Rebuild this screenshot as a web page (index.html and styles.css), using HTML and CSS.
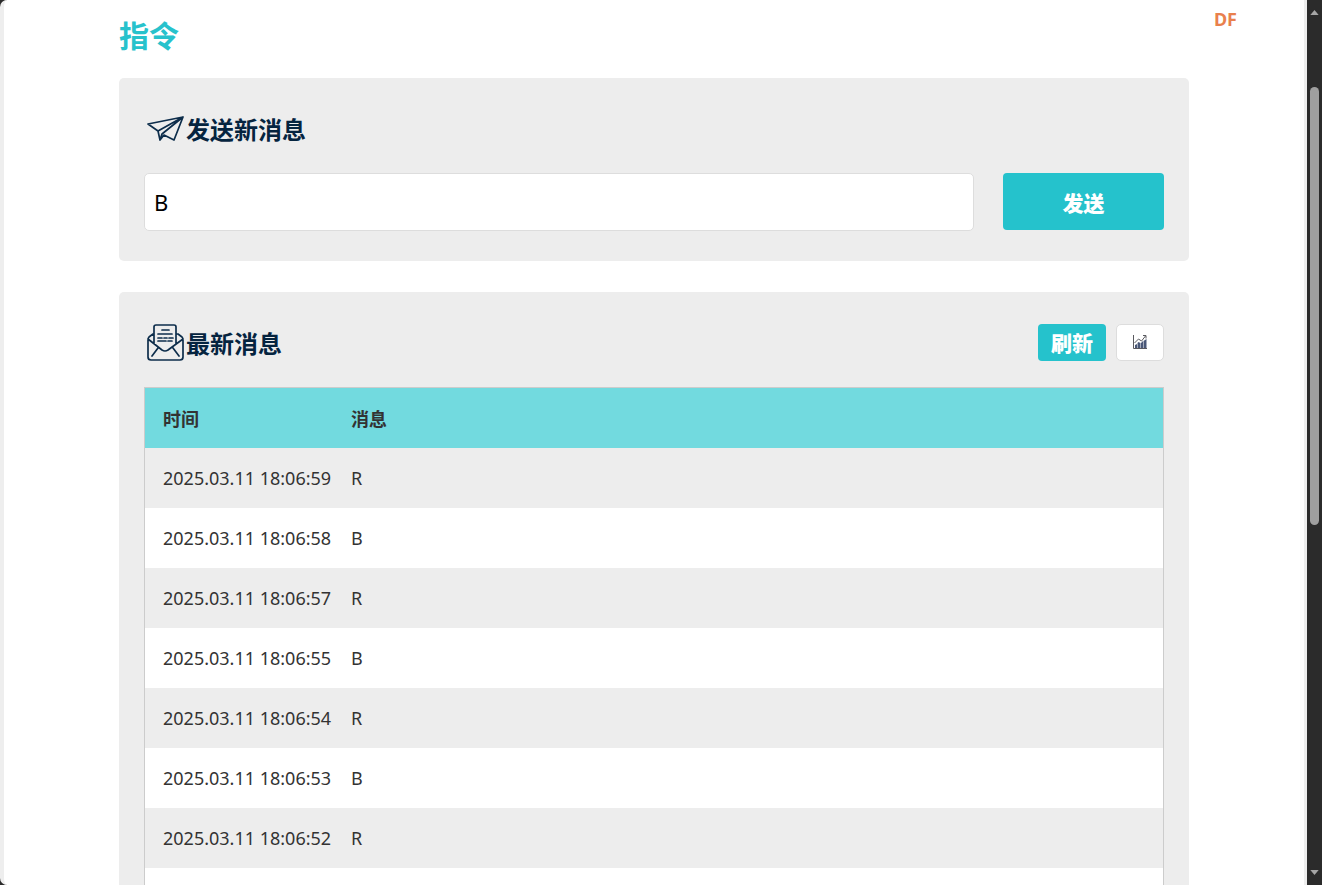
FILE: index.html
```html
<!DOCTYPE html>
<html lang="zh-CN">
<head>
<meta charset="utf-8">
<title>指令</title>
<link rel="stylesheet" href="styles.css">
</head>
<body>
<div class="window">
  <div class="viewport">
    <span class="badge">DF</span>
    <main class="content">
      <h1 class="title">指令</h1>
      <section class="card">
        <h2 class="heading">
          <svg class="heading-icon" viewBox="0 0 38 38" aria-hidden="true">
            <path d="M2 15 37 8 28 31 18 26 14 31 12 22ZM12 22 37 8 16 25 14 31"/>
          </svg>
          <label for="message">发送新消息</label>
        </h2>
        <form class="send-form">
          <input class="message-input" id="message" type="text" value="B">
          <button class="button send-button" type="button">发送</button>
        </form>
      </section>
      <section class="card">
        <div class="card-bar">
          <h2 class="heading">
            <svg class="heading-icon" viewBox="-1 -1 38 38" aria-hidden="true">
              <path d="M7 20V3q0-2 2-2h18q2 0 2 2v17M7 10H6L2 13q-1 1-1 3v17q0 3 3 3h29q3 0 3-3V16q0-2-1-3l-4-3h-2M1 15l14 11q3 2 6 0L36 15M5 32l6-8M32 32l-6-8M15 6h7M11 10h14M11 14h4M17 14h3M22 14h4M11 17h8M21 17h4"/>
            </svg>
            最新消息
          </h2>
          <div class="actions">
            <button class="button refresh-button" type="button">刷新</button>
            <button class="chart-button" type="button" aria-label="图表">
              <svg class="chart-icon" viewBox="0 0 14 15" aria-hidden="true">
                <path class="bars" d="M2 14V10l2-1v5zM4.500 14V8l1-1 2 1v6zM8 14V8l2-2v8zM10.500 14V6l3-2v10z"/>
                <path class="axis" d="M.5 0v13.500H14M1.500 8l4-4 3 2 4-5M10 .5h3v3"/>
              </svg>
            </button>
          </div>
        </div>
        <table class="messages">
          <thead><tr><th class="time" scope="col">时间</th><th scope="col">消息</th></tr></thead>
          <tbody>
            <tr><td>2025.03.11 18:06:59</td><td>R</td></tr>
            <tr><td>2025.03.11 18:06:58</td><td>B</td></tr>
            <tr><td>2025.03.11 18:06:57</td><td>R</td></tr>
            <tr><td>2025.03.11 18:06:55</td><td>B</td></tr>
            <tr><td>2025.03.11 18:06:54</td><td>R</td></tr>
            <tr><td>2025.03.11 18:06:53</td><td>B</td></tr>
            <tr><td>2025.03.11 18:06:52</td><td>R</td></tr>
            <tr><td></td><td></td></tr>
          </tbody>
        </table>
      </section>
    </main>
  </div>
  <div class="scrollbar" aria-hidden="true">
    <svg class="arrow" viewBox="0 0 10 6"><path d="M0 6 5 0l5 6z"/></svg>
    <div class="track"><div class="thumb"></div></div>
    <svg class="arrow" viewBox="0 0 10 6"><path d="M0 0h10L5 6z"/></svg>
  </div>
</div>
</body>
</html>
```
FILE: styles.css
```css
* { box-sizing: border-box; }

body {
  margin: 0;
  background: #2b2b2b;
  color: #333;
  font-family: "Noto Sans", "Noto Sans CJK SC", sans-serif;
  font-size: 18px;
}

button, input { font-family: inherit; }

.window {
  display: flex;
  height: 100vh;
  overflow: hidden;
}

.viewport {
  position: relative;
  flex: 1;
  overflow: hidden;
  background: #fff;
  border-left: 4px solid #eee;
  border-right: 3px solid #eee;
  border-radius: 7px 0 0 7px;
}

.badge {
  position: absolute;
  top: 7px;
  right: 67px;
  color: #e9804d;
  font-size: 18px;
  font-weight: 700;
  line-height: 24px;
}

.content {
  max-width: 1070px;
  margin: 0 auto;
  padding-top: 12px;
}

.title {
  margin: 0 0 18px;
  color: #27c2cc;
  font-size: 30px;
  line-height: 48px;
}

.card {
  margin-bottom: 31px;
  padding: 30px 25px;
  background: #ededed;
  border-radius: 5px;
}

.heading {
  display: flex;
  align-items: center;
  height: 40px;
  margin: 0;
  padding-left: 2px;
  gap: 2px;
  color: #05243f;
  font-size: 24px;
}

.heading-icon {
  width: 38px;
  height: 38px;
  fill: none;
  stroke: #0d2d4b;
  stroke-width: 1.7;
  stroke-linecap: round;
  stroke-linejoin: round;
}

.send-form {
  display: flex;
  gap: 29px;
  margin-top: 25px;
}

.message-input {
  flex: 1;
  min-width: 0;
  height: 58px;
  padding: 0 9px;
  border: 1px solid #ddd;
  border-radius: 5px;
  background: #fff;
  color: #000;
  font-size: 22px;
}

.button {
  padding: 0;
  border: 0;
  border-radius: 4px;
  background: #25c2cc;
  color: #fff;
  font-size: 21px;
  font-weight: 900;
}

.send-button {
  width: 161px;
  height: 57px;
}

.card-bar {
  display: flex;
  align-items: center;
  justify-content: space-between;
}

.actions {
  display: flex;
  gap: 10px;
}

.refresh-button {
  width: 68px;
  height: 37px;
}

.chart-button {
  display: grid;
  place-items: center;
  width: 48px;
  height: 37px;
  padding: 0;
  border: 1px solid #ddd;
  border-radius: 5px;
  background: #fff;
}

.chart-icon {
  width: 14px;
  height: 15px;
}

.bars { fill: #4a5878; }
.axis { fill: none; stroke: #59595f; }

.messages {
  width: 100%;
  margin-top: 25px;
  border: 1px solid #ccc;
  border-spacing: 0;
  table-layout: fixed;
}

.messages th,
.messages td {
  height: 60px;
  padding: 0 18px;
  text-align: left;
}

.messages th { background: #72dadf; }
.messages .time { width: 188px; }
.messages td { white-space: nowrap; }
.messages tbody tr:nth-child(even) { background: #fff; }

.scrollbar {
  display: flex;
  flex-direction: column;
  align-items: center;
  width: 15px;
  padding: 10px 0;
}

.arrow {
  width: 9px;
  height: 5px;
  fill: #a6a6a6;
}

.track {
  flex: 1;
  width: 9px;
  padding-top: 72px;
}

.thumb {
  height: 56%;
  border-radius: 5px;
  background: #9f9f9f;
}
```
